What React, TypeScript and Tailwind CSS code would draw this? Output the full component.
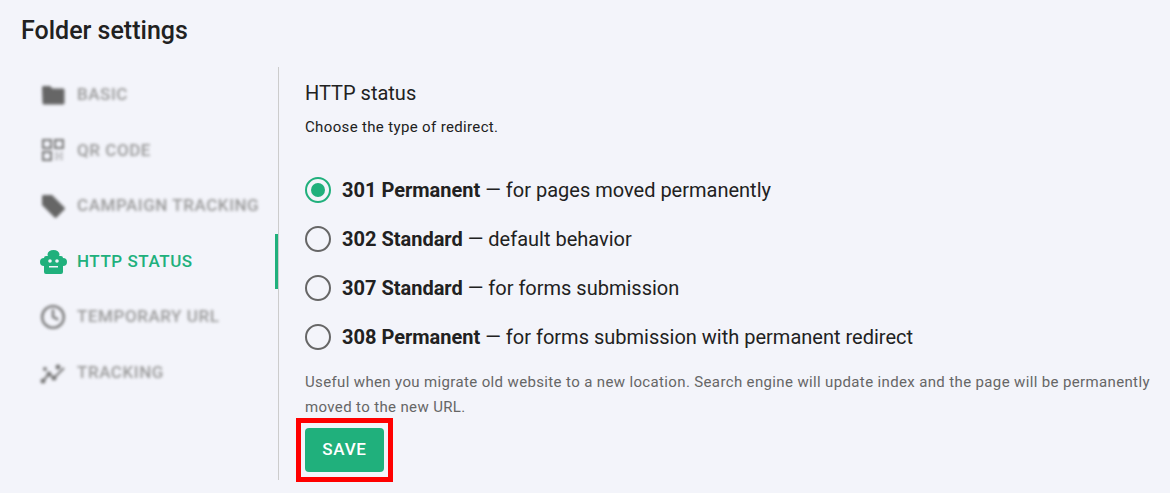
import { Clock } from "lucide-react";

const NAV_ITEMS = [
  { label: "BASIC", icon: <FolderIcon /> },
  { label: "QR CODE", icon: <QrIcon /> },
  { label: "CAMPAIGN TRACKING", icon: <TagIcon /> },
  { label: "HTTP STATUS", icon: <RobotIcon />, active: true },
  { label: "TEMPORARY URL", icon: <Clock size={26} strokeWidth={2.2} className="text-[#777]" /> },
  { label: "TRACKING", icon: <TrackIcon /> },
];

const OPTIONS = [
  { code: "301 Permanent", text: "for pages moved permanently", checked: true },
  { code: "302 Standard", text: "default behavior" },
  { code: "307 Standard", text: "for forms submission" },
  { code: "308 Permanent", text: "for forms submission with permanent redirect" },
];

function FolderIcon() {
  return (
    <svg viewBox="0 0 26 26" className="w-[26px] h-[26px] text-[#666]" fill="currentColor">
      <path d="M2 5.5c0-.8.7-1.5 1.5-1.500h6.500l2.500 2.500h10.500c.8 0 1.500.7 1.500 1.500v13c0 .8-.7 1.500-1.500 1.500h-19c-.8 0-1.500-.7-1.500-1.500z" />
    </svg>
  );
}

function QrIcon() {
  return (
    <svg viewBox="0 0 26 26" className="w-[26px] h-[26px] text-[#777]" fill="none" stroke="currentColor" strokeWidth="2">
      <rect x="3" y="3" width="8" height="8" />
      <rect x="15" y="3" width="8" height="8" />
      <rect x="3" y="15" width="8" height="8" />
      <path d="M15 16h3M20 16h3M15 19h8M15 22h3M20 22h3" strokeWidth="1.5" opacity="0.6" />
    </svg>
  );
}

function TagIcon() {
  return (
    <svg viewBox="0 0 26 26" className="w-[26px] h-[26px] text-[#666]" fill="currentColor">
      <path d="M2 3.5C2 2.700 2.700 2 3.500 2h8.500l12.500 12.500c.6.6.6 1.500 0 2.100l-7.900 7.900c-.6.6-1.500.6-2.100 0L2 12z" />
    </svg>
  );
}

function RobotIcon() {
  return (
    <svg viewBox="0 0 28 26" className="w-[28px] h-[26px] text-[#20b07c]" fill="currentColor">
      <ellipse cx="13.5" cy="5.5" rx="6" ry="4.5" />
      <path
        fillRule="evenodd"
        d="M6 7h15a2 2 0 0 1 2 2a4 4 0 0 1 0 8v6a2 2 0 0 1-2 2H6a2 2 0 0 1-2-2v-6a4 4 0 0 1 0-8a2 2 0 0 1 2-2zM10 10.200a1.800 1.800 0 1 0 0 3.600a1.800 1.800 0 1 0 0-3.600zM17 10.200a1.800 1.800 0 1 0 0 3.600a1.800 1.800 0 1 0 0-3.600zM9 17h9v1.500H9z"
      />
    </svg>
  );
}

function TrackIcon() {
  return (
    <svg viewBox="0 0 28 26" className="w-[28px] h-[26px] text-[#777]" fill="none" stroke="currentColor" strokeWidth="2">
      <path d="M3 21l6-7 5 4 10-10" />
      <circle cx="3" cy="21" r="1.5" fill="currentColor" />
      <circle cx="9" cy="14" r="1.5" fill="currentColor" />
      <circle cx="14" cy="18" r="1.5" fill="currentColor" />
      <circle cx="18" cy="7" r="1.5" fill="currentColor" />
      <circle cx="5" cy="9" r="1" fill="currentColor" />
    </svg>
  );
}

function NavItem({ label, icon, active }: { label: string; icon: React.ReactNode; active?: boolean }) {
  return (
    <div className={`flex items-center h-[55.6px] pl-10 ${active ? "border-r-[3px] border-[#20b07c] text-[#20b07c]" : "blur-[1.5px] text-[#999]"}`}>
      <span className="w-[37px] flex-shrink-0">{icon}</span>
      <span className="text-[17px] font-medium tracking-[0.55px] whitespace-nowrap">{label}</span>
    </div>
  );
}

function RadioRow({ code, text, checked }: { code: string; text: string; checked?: boolean }) {
  return (
    <label className="flex items-center h-[49px] text-[20px] text-[#212121]">
      <span className={`w-[26px] h-[26px] rounded-full border-[2.5px] flex items-center justify-center flex-shrink-0 ${checked ? "border-[#20b07c]" : "border-[#666]"}`}>
        {checked && <span className="w-[14px] h-[14px] rounded-full bg-[#20b07c]" />}
      </span>
      <span className="ml-[11px] whitespace-nowrap">
        <strong className="font-bold">{code}</strong> — {text}
      </span>
    </label>
  );
}

export default function App() {
  return (
    <div className="w-[1170px] h-[493px] overflow-hidden bg-[#f3f4fa] font-['Roboto',sans-serif]">
      <h1 className="pl-[21px] pt-[14px] h-[67px] text-[25px] font-medium leading-[34px] text-[#212121]">Folder settings</h1>
      <div className="flex">
        <aside className="w-[279px] h-[413px] border-r border-[#ccc] flex-shrink-0">
          {NAV_ITEMS.map(item => (
            <NavItem key={item.label} label={item.label} icon={item.icon} active={item.active} />
          ))}
        </aside>
        <main className="pl-[26px] flex-1">
          <h2 className="text-[20px] leading-[28px] text-[#212121] mt-[12px]">HTTP status</h2>
          <p className="text-[15px] tracking-[0.35px] leading-[20px] text-[#212121] mt-[10px]">Choose the type of redirect.</p>
          <div className="mt-[28px]">
            {OPTIONS.map(o => (
              <RadioRow key={o.code} code={o.code} text={o.text} checked={o.checked} />
            ))}
          </div>
          <p className="text-[15px] tracking-[0.36px] leading-[25px] text-[#666] mt-[9px] w-[850px]">
            Useful when you migrate old website to a new location. Search engine will update index and the page will be permanently moved to the new URL.
          </p>
          <div className="relative w-[79px] mt-[8px]">
            <button className="w-[79px] h-[44px] rounded bg-[#20b07c] text-white text-[17px] font-medium tracking-[0.75px]">SAVE</button>
            <div className="absolute -left-[9px] -right-[9px] -top-[10px] -bottom-[10px] border-[5px] border-[#ff0000]" />
          </div>
        </main>
      </div>
    </div>
  );
}
